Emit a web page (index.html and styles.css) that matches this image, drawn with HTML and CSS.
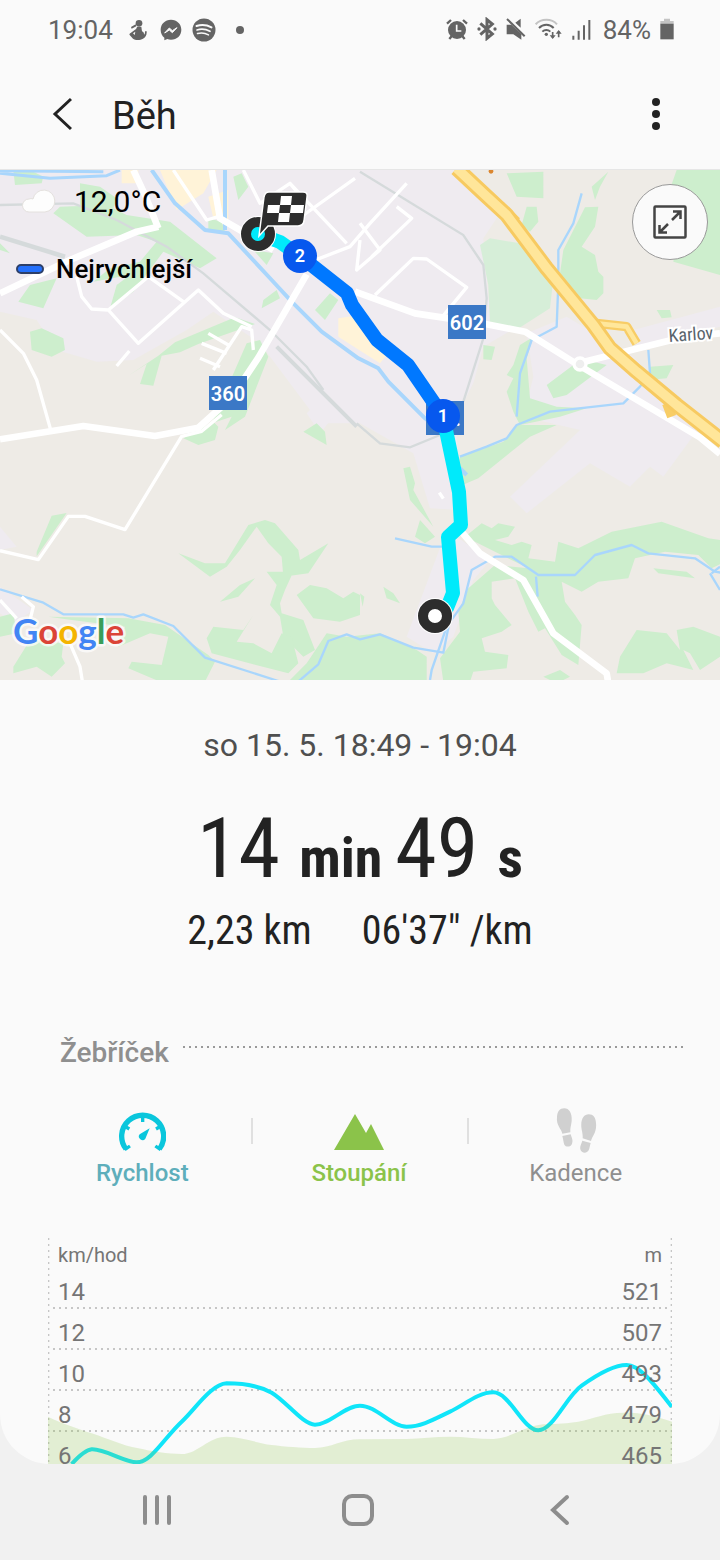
FILE: index.html
```html
<!DOCTYPE html>
<html lang="cs">
<head>
  <meta charset="UTF-8">
  <meta name="viewport" content="width=device-width, initial-scale=1.0">
  <title>Běh</title>
  <link rel="stylesheet" href="styles.css">
</head>
<body>
  <div class="screen">
    <div class="status-bar">
      <div class="status-left">
        <span>19:04</span>
        <svg class="ic-run" width="18" height="20" viewBox="0 0 54 60"><circle cx="30" cy="10" r="10"/><path d="M6 21L20 13l2 6-14 7zM24 20h13l2 14c6 3 6 6 6 10 3-2 3-6 3-10h5c1 12-4 19-11 22-8 5-24 5-30 0L2 45c-2-3 0-4 3-6l13-10c4-2 5-5 6-9z"/><path d="M19 35l-7 5 5 5z" fill="#fafafa"/></svg>
        <svg width="22" height="22" viewBox="0 0 66 66"><path d="M33 2C15 2 2 15 2 32c0 10 4 18 11 24v8l9-4c3 1 7 2 11 2 18 0 31-13 31-30S51 2 33 2z"/><path d="M14 42l14-15 9 8 14-9-14 15-9-8z" fill="#fafafa" stroke="#fafafa" stroke-width="3"/></svg>
        <svg width="24" height="24" viewBox="0 0 24 24"><circle cx="12" cy="12" r="11.500"/><g fill="none" stroke="#fafafa" stroke-linecap="round"><path stroke-width="2" d="M4.500 8c5-1.500 10.500-1 15 1.400"/><path stroke-width="1.700" d="M5 12c4.500-1.400 9-.8 13 1.300"/><path stroke-width="1.500" d="M5.500 15.600c4-1 7.500-.6 11 1.300"/></g></svg>
        <svg class="ic-dot" width="10" height="10" viewBox="0 0 10 10"><circle cx="5" cy="5" r="4"/></svg>
      </div>
      <div class="status-right">
        <svg width="22" height="22" viewBox="0 0 66 66"><circle cx="33" cy="36" r="27"/><path d="M10 63l8-10M56 63l-8-10M3 17L15 6M51 6l12 11" stroke="#646464" stroke-width="7"/><path d="M32 20v19h14" fill="none" stroke="#fafafa" stroke-width="5"/></svg>
        <svg width="20" height="24" viewBox="0 0 60 72"><path d="M10 19l36 32-16 13V8l16 13-36 32" fill="none" stroke="#646464" stroke-width="9"/><circle cx="6" cy="36" r="5"/><circle cx="54" cy="36" r="5"/></svg>
        <svg width="20" height="22" viewBox="0 0 60 66"><path d="M2 20h14l30 28v17L22 49H2zM28 14L44 2v27z"/><path d="M3 3l53 52" stroke="#646464" stroke-width="6"/></svg>
        <svg width="28" height="22" viewBox="0 0 84 66"><g fill="none" stroke="#646464" stroke-width="6"><path d="M2 19C18 1 50 1 66 19" stroke="#c4c4c4"/><path d="M12 30c12-13 32-13 44 0"/><path d="M22 41c7-7 17-7 24 0"/></g><circle cx="34" cy="49" r="5"/><path d="M53 42v18M71 58V40" stroke="#646464" stroke-width="5"/><path d="M44 52h18l-9 11zM62 47h18l-9-11z"/></svg>
        <svg width="20" height="22" viewBox="0 0 60 66"><path d="M4 53v12M20 38v27M36 22v43M52 6v59" stroke="#646464" stroke-width="6" fill="none"/></svg>
        <span class="battery-text">84%</span>
        <svg width="14" height="22" viewBox="0 0 42 66"><path d="M12 2h18v7h11v8H1V9h11z" fill="#c4c4c4"/><path d="M1 17h40v47H1z"/></svg>
      </div>
    </div>

    <header class="app-bar">
      <button class="icon-btn" aria-label="Zpět"><svg width="22" height="34" viewBox="0 0 22 34"><path d="M21 2L5 17l16 15" fill="none" stroke="#222" stroke-width="3"/></svg></button>
      <h1>Běh</h1>
      <button class="icon-btn more" aria-label="Další možnosti"><svg width="10" height="34" viewBox="0 0 10 34"><circle cx="5" cy="5" r="4"/><circle cx="5" cy="17" r="4"/><circle cx="5" cy="29" r="4"/></svg></button>
    </header>

    <section class="map">
      <!-- terrain, water and roads -->
      <svg class="map-layer" viewBox="0 0 2160 1530" preserveAspectRatio="xMidYMid slice">
        <rect width="2160" height="1530" fill="#eeebe6"/>
        <g fill="#efebf0">
          <path d="M0 0H1380L1500 130 1450 205 1470 435 1560 465 1450 530 1420 640 1390 700 1370 780 1380 1020 1290 1015 1240 850 1080 760 960 760 780 520 640 425 560 480 400 570 290 575 170 540 110 450 0 425z"/>
          <path d="M1580 490L1700 440 1900 560 2100 770 1990 920 1950 890 1890 950 1770 880 1580 1030 1530 980 1740 780 1570 740 1600 620z"/>
          <path d="M0 1070l50 60-50 10zM0 1250l100 70-60 40-40-30zM1340 1080l130 90-50 60-60 170-60 50-80-50z"/>
          <path d="M920 730l40-40 40 50-40 50zM1900 480l260-70v60l-250 60z"/>
        </g>
        <g fill="#fff3d8">
          <path d="M365 0h50v40h-50zM480 0h170l-40 70-80 50zM625 80l60-20v90l-45-5zM1015 445l65-10 80 120-20 25-125-80z"/>
        </g>
        <g fill="#cdeecd">
          <path d="M40 0h50l40 20-5 20-80 5zM240 40l60 10 50 35-10 30 20 10-50 20-70-40zM160 130l20-20 140-5 60 30 130 20 140 110-50 30-110-50-90 120-70 50 20-70 40-30-110 20 50-40 90-20 50-60-60-20-150 5zM0 220l30 30-30-10z"/>
          <path d="M90 345l80-20-40 90-75-20zM90 485l35-10 65 30 5 35-40 20-60-20zM385 617l90-60 50-40 180-75 60 20-170 60-55 25-55 10-25 90-40-5 20-60zM740 520l40-10 25 50-70 180-60 40 20-40-60 20z"/>
          <path d="M700 20l25-10 20 40-30 40zM790 390l40-30 10 25-55 30zM945 420l45-50 25 20-40 60zM625 145l40 10 10 30-50-5zM760 240l60 10-20 35z"/>
          <path d="M1520 10l110-5v80l-80-5zM1775 50l50-45-25 45-15 40zM1580 110h30l5 45-25 30-25-20zM1755 112l40-2-10 60-40 60 40 25 10 50 15 15v50l-20 20-50-5-60-75 10-70zM2030 0h130v315l-140-40 20-130-40-60zM1970 420h40l5 22-30 3zM1450 525l35 5-10 40-25-2z"/>
          <path d="M1600 500l-20 65 10 120 80 25 90 5-80 25-120 25-20-40-20-60 20-40-20-10 20-30 20-60zM1640 645l80-60 60-10 40 10-120 90-40 10zM1950 590l70-5-20 40-60 5z"/>
          <path d="M1380 860l130-45 40-50h120l-80 35-75 60-80 65-60 25-20 10z"/>
          <path d="M110 1145l45-108 45-8-90 130zM550 805l90-50 15 15-10 40-50 15zM910 785l40-25 25 25 5 40zM535 1150l80 30h60l70-115 50-15 30 10 70 80 5 30 85-50-60 90-75 10-5-60-40-40-35-50-50 70-40 50-50 30zM660 1295l60-50 45-20-50 55zM800 1205h80l-25 55-15 40 5 30 65 20 35 90-35 20-60-60-10-60-30-35 20-60z"/>
          <path d="M890 1275l40-30 50 10 50 30 30-20 20 10v60l-60 20-80-10zM620 1405l20-35 90 10 30-45-50 80 50 5 55 30 30-60 30 10 20 80-30 30-230-60zM0 1340l40-10 10 60-50 10zM40 1490l50-80 100 10-5 40 10 20-40 40-45-30-70 20zM145 1340l240 5 110 20 130 90 20 20-30 60H480l-95-40 10-20 90 10 20-85-55-10-95 40 20-60-160-20z"/>
          <path d="M870 1530l50-50 60-90 60 10 100-10 110 50 30 20v70zM1150 1250l30 20 20 30-40-15zM1210 895l20-5 15 50-5 20 60 110-70-80zM1260 1050l45 50-30 20-30-20zM1080 1270l13 10-5 30z"/>
          <path d="M1395 1100l50-40 30 15 20-15 50 10-20 30-40 10 50 15 30-10 30 10-10 40 80 10 10-60 60 20 100-50 150-30 140 50 70 10v50l-60 30-40-40-100-10-90 20-20 60-90 10-50 30-60-30 10 60 30 40 20 30-10 120-50-30-50-80-20 10-30-60-40-100-70 10 0 50 10 20 50 60-30 20-60 20 10 40 70 10-5 40-100 10-10 30h-80l-10-70 60-80-5-60 30-70 80-70 100 10z"/>
          <path d="M1960 1195l100 10 25 20-110-15zM1860 1460l50-80 90 10 40 50-10-60 50-10 80 30v60l-60 40-30-50-20-10 30 60-80-20-70 30h-80zM1630 1520l50-20 30 20-40 20z"/>
        </g>
        <path fill="#d6eed8" d="M1440 225l30-20 120 20 70 100-10 90-110 70-70-25-5-115z"/>

        <g fill="none" stroke="#a9d6fc" stroke-width="7" stroke-linejoin="round">
          <path stroke-width="9" d="M0 10l150 15 170-8 40-17M0 2l310 3"/>
          <path stroke-width="12" d="M455 0l70 100 90 80 70 10 130 140 60 65 90 90 110 80 60 30 30 40 110 110 60 50 35 90 30 30M675 0v180"/>
          <path d="M0 1258l130 40 60 35h180l30 10 30-10 90 35 95 95 220 70 50 10 70-60 30-70 55-20 40 15 60-15 100 40 90 15 20-100"/>
          <path d="M1745 70l-25 90-45 80v100l-5 130-75 40-35 100-10 130M1380 860l80-30 60-25 30-40 100-40 220-25 50-50 30-40-5-70M1185 1105l110 25h60M1290 1530l5-30 45-130 50-70 25-100 70-40h50l80 55h110l60-60 110-30 50 25 140 15 60 40 30 5M1608 1220l5 60M2160 1190l-25 20M2130 1210l30 50"/>
        </g>
        <g fill="none" stroke="#d5dadb" stroke-width="7">
          <path stroke-width="14" d="M0 200l195 60"/><path d="M0 105l220-5 130 50 150 80 110 80 200 170 110 110 50 70"/>
          <path stroke-width="12" d="M830 530l130 130 110 110"/><path d="M1080 5l310 190 60 90 10 100-10 120-60 190M1070 760l70 60 90 12 90-37"/>
        </g>

        <g fill="none" stroke="#fff" stroke-width="10" stroke-linejoin="round">
          <path d="M230 320l15 60 30 37 50 3 90 100 180-160 75 70 85 40M325 420l120-100 105 75M350 588l38-45M0 480l70 70 40 80 45 160M625 490l60 35M605 520l75 30M600 565l60 25M640 600l85-130 30 10 5 60"/>
          <path d="M520 0l100 150 35-10M730 0l50 100 90-60 170 180M890 150l175-125M870 40l50 60M920 280l130-50 60-70 110-120M1080 160l60 80-70 60 10-90M1190 110l45 35-120 115M1125 375l115-110 40 2 120 85-70 85"/>
          <path d="M0 1142l115 27 90-130h50l120 40 170-280 60-15 60-50M0 1290l50 55M65 1280l35 30-10 40M210 1420l30 70 8 50M1318 968l12 18"/>
        </g>
        <g fill="none" stroke="#fff" stroke-linejoin="round">
          <path stroke-width="20" d="M0 370l210-100 200-85 65-15M400 0l35 75 40 100M0 808l250-40 215 30 130-25 100-90 80-120 145-250"/>
          <path stroke-width="20" d="M635 0l25 145 60 35 100 60M1065 365l180 65 200 30 130 25 155 97 370 220 60 50"/>
          <path stroke-width="20" d="M1735 580l180-45 140-35 105-10M1380 1080l60 70 130 80 90 160 160 120 5 30"/>
        </g>
        <circle cx="1740" cy="582" r="18" fill="#eee" stroke="#fff" stroke-width="10"/>
        <g fill="none" stroke-linejoin="round">
          <path stroke="#f8cd66" stroke-width="28" d="M1500 105l50 50M1790 460l90 10 30 50M2000 700l15 40"/>
          <path stroke="#ffe79b" stroke-width="14" d="M1790 460l90 10 30 50"/>
          <path stroke="#f7ca61" stroke-width="46" d="M1370-5l80 75 70 65 120 160 140 170 50 70 80 70 120 100 140 110"/>
          <path stroke="#ffe69a" stroke-width="28" d="M1370-5l80 75 70 65 120 160 140 170 50 70 80 70 120 100 140 110"/>
        </g>
        <circle cx="1473" cy="4" r="7" fill="#db862f"/>
      </svg>

      <!-- route, road shields and pins -->
      <svg class="map-layer" viewBox="0 0 720 510" preserveAspectRatio="xMidYMid slice">
        <g fill="#3b78c6"><path d="M209 206h38v34h-38zM448 135h38v34h-38zM426 231h38v34h-38z"/></g>
        <g class="shield"><text x="228" y="231">360</text><text x="467" y="160">602</text><text x="458" y="256">.</text></g>
        <g fill="none" stroke-width="14" stroke-linejoin="round">
          <path stroke="#00eafb" d="M258 64l22 8 20 14M443 246l4 19 12 57 2 33-13 12 5 56-6 15-12 8"/>
          <path stroke="#0078ff" d="M300 86l47 37 5 12 25 35 31 25 35 51"/>
        </g>
        <text class="place" x="669" y="172" transform="rotate(-4 669 172)">Karlov</text>
        <g fill="#0758ee"><circle cx="300" cy="86" r="17"/><circle cx="443" cy="246" r="17"/></g>
        <g class="pin-no"><text x="300" y="92">2</text><text x="443" y="252">1</text></g>
        <circle cx="435" cy="446" r="18" fill="#fff"/><circle cx="435" cy="446" r="12" fill="#fff" stroke="#2d2d2d" stroke-width="10"/>
        <circle cx="258" cy="64" r="18" fill="#fff"/><circle cx="258" cy="64" r="12" fill="#00eafb" stroke="#2d2d2d" stroke-width="10"/>
        <path d="M269 22h34q5 0 4 5l-3 24q-1 5-6 5h-30l-9 10 5-39q1-5 5-5z" fill="#2d2d2d" stroke="#fff" stroke-width="1.500"/>
        <path fill="#fff" d="M281 26h11l-1 9h-11zM268 35h12l-1 8h-12zM291 35h13l-1 8h-13zM279 43h11l-1 9h-11z"/>
        <text class="google" x="13" y="474"><tspan fill="#4285f4">G</tspan><tspan fill="#db4437">o</tspan><tspan fill="#f4b400">o</tspan><tspan fill="#4285f4">g</tspan><tspan fill="#3a9d58">l</tspan><tspan fill="#db4437">e</tspan></text>
      </svg>

      <div class="map-info">
        <div class="weather"><svg width="36" height="26" viewBox="0 0 36 26"><path d="M9 24a6 6 0 010-13q2-1 4 0a11 11 0 1112 13z" fill="#fdfdfd" stroke="#e4e1de"/></svg><span>12,0°C</span></div>
        <div class="legend"><span class="legend-mark"></span><span>Nejrychlejší</span></div>
      </div>
      <button class="expand" aria-label="Zvětšit mapu"><svg width="34" height="34" viewBox="0 0 34 34" fill="none" stroke="#444" stroke-width="2.500"><rect x="1.500" y="1.500" width="31" height="31" rx="1"/><path d="M19 15l8-8M20 6.500h7.500V14M15 19l-8 8M6.500 20v7.500H14"/></svg></button>
    </section>

    <section class="summary">
      <p class="date">so 15. 5. 18:49 - 19:04</p>
      <p class="duration">14 <b>min </b>49 <b>s</b></p>
      <p class="totals"><span>2,23 km</span><span>06'37" /km</span></p>
    </section>

    <section class="board">
      <div class="board-head"><h2>Žebříček</h2><span class="dots"></span></div>
      <div class="tabs">
        <button class="tab speed"><svg width="48" height="44" viewBox="0 0 144 132"><path d="M24 120A63 63 0 1 1 124 120" fill="none" stroke="#0ac6dc" stroke-width="16"/><path d="M74 20v19M24 54l10 6M124 54l-10 6M20 122l16-11M128 122l-16-11" stroke="#0ac6dc" stroke-width="10"/><path d="M95 58L82 89a10 10 0 11-17-13z" fill="#0ac6dc"/></svg>Rychlost</button>
        <button class="tab climb"><svg width="50" height="44" viewBox="0 0 50 44"><path d="M0 41L21 5l11 19 5-9 13 26z" fill="#8bc34a"/></svg>Stoupání</button>
        <button class="tab cadence"><svg width="42" height="46" viewBox="0 0 126 138"><g fill="#d0d0d0"><path d="M6 30C7 14 14 4 28 4s24 14 22 38c-1 12-5 20-4 34L22 80C19 65 3 55 6 30zM22 87l25-5c3 10 8 18 4 28-3 10-18 12-23 3-3-7-3-16-6-26z"/><path d="M123 48c-1-16-8-26-22-26s-24 14-22 38c1 12 5 20 4 34l25 8c3-15 18-25 15-54zM107 108l-25-7c-3 10-8 16-6 26 3 12 19 14 25 3 3-7 3-12 6-22z"/></g></svg>Kadence</button>
      </div>

      <div class="chart">
        <svg viewBox="0 0 1872 678" preserveAspectRatio="none">
          <g fill="none" stroke="#c6c6c6" stroke-dasharray="6 12">
            <path stroke-width="6" d="M15 210H1857M15 333H1857M15 456H1857M15 579H1857"/>
            <path stroke-width="4" d="M2 0V678M1870 0V678"/>
          </g>
          <path fill="none" stroke="#10e5f9" stroke-width="12" d="M71 678Q110 636 131 634C170 632 230 673 266 673C310 673 350 598 401 551C440 515 490 438 536 436C580 436 630 442 671 464C715 490 765 560 801 560C845 560 890 503 936 503C985 503 1030 566 1076 566C1120 566 1160 543 1206 521C1250 500 1290 463 1336 463C1385 463 1425 577 1471 577C1515 577 1555 475 1601 443C1640 415 1695 381 1736 381C1780 381 1830 455 1871 506"/>
          <path fill="rgba(139, 195, 74, .22)" d="M0 536C40 556 90 572 131 586C180 602 220 622 271 631C310 640 360 648 401 648C450 648 480 596 536 596C580 596 620 614 671 621C710 626 760 630 801 630C850 630 880 604 936 604L1076 603C1120 601 1160 596 1206 596C1250 596 1290 603 1336 603C1390 600 1430 564 1486 559C1530 557 1560 556 1591 551C1640 542 1670 524 1726 524C1770 522 1820 534 1872 551V678H0z"/>
        </svg>
        <div class="scale unit"><span>km/hod</span><span>m</span></div>
        <div class="scale"><span>14</span><span>521</span></div>
        <div class="scale"><span>12</span><span>507</span></div>
        <div class="scale"><span>10</span><span>493</span></div>
        <div class="scale"><span>8</span><span>479</span></div>
        <div class="scale"><span>6</span><span>465</span></div>
      </div>
    </section>
  </div>

  <nav class="nav-bar">
    <button aria-label="Poslední aplikace"><svg width="34" height="34" viewBox="0 0 34 34"><path d="M5 4v26M17 4v26M29 4v26"/></svg></button>
    <button aria-label="Domů"><svg width="34" height="34" viewBox="0 0 34 34"><rect x="3" y="3" width="28" height="28" rx="8"/></svg></button>
    <button aria-label="Zpět"><svg width="34" height="34" viewBox="0 0 34 34"><path d="M25 4L11 17l14 13"/></svg></button>
  </nav>
</body>
</html>
```
FILE: styles.css
```css
* {
  box-sizing: border-box;
}
body {
  margin: 0;
  height: 100vh;
  display: flex;
  flex-direction: column;
  overflow: hidden;
  background: #f1f1f1;
  font-family: Roboto, sans-serif;
  color: #222;
}
h1, h2, p {
  margin: 0;
  font-weight: 400;
}
button {
  border: none;
  background: none;
  padding: 0;
  font: inherit;
  color: inherit;
  cursor: pointer;
}
svg {
  display: block;
  flex-shrink: 0;
}
.screen {
  flex: 1;
  min-height: 0;
  overflow: hidden;
  background: #fafafa;
  border-radius: 0 0 50px 50px;
}

/* status bar */
.status-bar {
  height: 60px;
  padding: 0 46px 0 48px;
  display: flex;
  align-items: center;
  justify-content: space-between;
  font-size: 26px;
  color: #646464;
  fill: #646464;
}
.status-left, .status-right {
  display: flex;
  align-items: center;
}
.status-left {
  gap: 10px;
}
.ic-run {
  margin: 0 3px 0 6px;
}
.ic-dot {
  margin-left: 9px;
}
.status-right {
  gap: 9px;
}
.status-right svg {
  margin-top: -2px;
}
.battery-text {
  margin-left: 2px;
}

/* title */
.app-bar {
  height: 110px;
  padding: 0 58px 2px 50px;
  display: flex;
  align-items: center;
  border-bottom: 1px solid #e6e6e6;
}
.app-bar h1 {
  flex: 1;
  margin-left: 40px;
  padding-top: 4px;
  font-size: 38px;
}
.more {
  padding-right: 1px;
  fill: #222;
}

/* map */
.map {
  position: relative;
  aspect-ratio: 720 / 510;
  overflow: hidden;
}
.map-layer {
  position: absolute;
  top: 0;
  left: 0;
  width: 100%;
  height: 100%;
}
.shield, .pin-no {
  fill: #fff;
  font-size: 20px;
  font-weight: 600;
  text-anchor: middle;
}
.pin-no {
  font-size: 18px;
}
.place {
  font-family: "Roboto Condensed", Roboto, sans-serif;
  font-size: 18px;
  fill: #58636b;
  stroke: #fff;
  stroke-width: 4px;
  paint-order: stroke;
}
.google {
  font-family: Lato, sans-serif;
  font-size: 35px;
  font-weight: 700;
  stroke: rgba(255, 255, 255, .7);
  stroke-width: 5px;
  stroke-linejoin: round;
  paint-order: stroke;
}
.map-info {
  position: relative;
  padding: 11px 16px;
  color: #000;
}
.weather, .legend {
  display: flex;
  align-items: center;
}
.weather {
  height: 40px;
  gap: 18px;
  padding-left: 4px;
  font-size: 30px;
}
.legend {
  height: 40px;
  margin-top: 28px;
  gap: 12px;
  font-size: 26px;
  font-weight: 500;
}
.legend-mark {
  width: 28px;
  height: 10px;
  border: 2px solid #2d3f68;
  border-radius: 5px;
  background: #2470fb;
}
.expand {
  position: absolute;
  top: 14px;
  right: 12px;
  width: 76px;
  height: 76px;
  border: 1px solid #999;
  border-radius: 50%;
  background: #fafafa;
  display: flex;
  align-items: center;
  justify-content: center;
}

/* numbers */
.summary {
  padding-top: 45px;
  text-align: center;
}
.date {
  font-size: 32px;
  line-height: 40px;
  color: #4f4f4f;
}
.duration {
  margin-top: 36px;
  font-family: "Roboto Condensed", Roboto, sans-serif;
  font-size: 84px;
  line-height: 96px;
}
.duration b {
  font-size: 56px;
}
.totals {
  display: flex;
  justify-content: center;
  gap: 50px;
  font-family: "Roboto Condensed", Roboto, sans-serif;
  font-size: 40px;
  line-height: 50px;
}

/* charts */
.board {
  padding-top: 79px;
}
.board-head {
  display: flex;
  padding: 0 36px 0 60px;
  gap: 14px;
}
.board-head h2 {
  font-size: 28px;
  font-weight: 500;
  line-height: 36px;
  color: #8f8f8f;
}
.dots {
  flex: 1;
  height: 2px;
  margin-top: 11px;
  background: repeating-linear-gradient(90deg, #999 0 2px, transparent 2px 6px);
}
.tabs {
  display: flex;
  padding: 0 36px 0 34px;
  margin-top: 34px;
}
.tab {
  position: relative;
  flex: 1;
  display: flex;
  flex-direction: column;
  align-items: center;
  justify-content: flex-end;
  height: 84px;
  font-size: 24px;
  font-weight: 500;
  line-height: 32px;
}
.tab svg {
  margin-bottom: 4px;
}
.tab + .tab::before {
  content: "";
  position: absolute;
  left: 0;
  top: 13px;
  width: 2px;
  height: 26px;
  background: #e0e0e0;
}
.speed {
  color: #5eaebb;
}
.climb {
  color: #8bc34a;
}
.cadence {
  color: #8f8f8f;
  font-weight: 400;
}
.chart {
  position: relative;
  margin: 49px 48px 0;
}
.chart svg {
  position: absolute;
  top: 0;
  left: 0;
  width: 100%;
  height: 226px;
}
.scale {
  position: relative;
  height: 41px;
  padding: 0 10px;
  display: flex;
  align-items: center;
  justify-content: space-between;
  font-size: 24px;
  color: #757575;
}
.unit {
  height: 33px;
  font-size: 20px;
}

/* system buttons */
.nav-bar {
  height: 96px;
  display: flex;
  align-items: center;
  justify-content: space-between;
  padding: 0 144px 4px 140px;
}
.nav-bar svg {
  fill: none;
  stroke: #8d8d8d;
  stroke-width: 4;
  stroke-linecap: round;
}
```
